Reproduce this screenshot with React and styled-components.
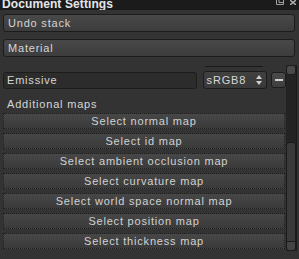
import React from 'react'
import styled, { createGlobalStyle } from 'styled-components'

const Global = createGlobalStyle`
  html, body {
    margin: 0;
    padding: 0;
    background: #333333;
  }
`

const Panel = styled.div`
  width: 299px;
  height: 259px;
  overflow: hidden;
  background: #333333;
  font-family: 'Liberation Sans', Arial, sans-serif;
  color: #d6d6d6;
  display: flex;
  flex-direction: column;
`

const TitleBar = styled.div`
  height: 10px;
  flex: none;
  overflow: hidden;
  background: #1b1b1b;
  display: flex;
  align-items: flex-start;
  padding: 0 3px 0 2px;
`

const Title = styled.div`
  font-weight: bold;
  font-size: 12px;
  line-height: 12px;
  margin-top: -2px;
  color: #e4e6ea;
  letter-spacing: 0.1px;
  flex: 1;
`

const TitleIcons = styled.div`
  display: flex;
  gap: 6px;
  align-items: flex-start;
`

const TopFields = styled.div`
  display: flex;
  flex-direction: column;
  gap: 7px;
  padding: 4px 4px 0 3px;
`

const Field = styled.div`
  height: 16px;
  border: 1px solid #1c1c1c;
  border-radius: 3px;
  background: linear-gradient(#494949, #3c3c3c);
  font-size: 11px;
  letter-spacing: 0.8px;
  line-height: 16px;
  padding-left: 4px;
`

const Lower = styled.div`
  display: flex;
  margin-top: 7px;
  flex: 1;
`

const Content = styled.div`
  width: 283px;
  padding-left: 3px;
  display: flex;
  flex-direction: column;
`

const Separator = styled.div`
  height: 1px;
  width: 58px;
  margin: 2px 0 0 202px;
  background: #1a1a1a;
`

const MaterialRow = styled.div`
  display: flex;
  align-items: center;
  margin-top: 4px;
  height: 18px;
`

const Input = styled.div`
  width: 193px;
  height: 15px;
  border: 1px solid #1c1c1c;
  border-radius: 3px;
  background: #2c2c2c;
  font-size: 11px;
  letter-spacing: 0.8px;
  line-height: 15px;
  padding-left: 3px;
  box-sizing: content-box;
`

const Select = styled.div`
  margin-left: 6px;
  width: 57px;
  height: 16px;
  border: 1px solid #1c1c1c;
  border-radius: 3px;
  background: linear-gradient(#414141, #393939);
  display: flex;
  align-items: center;
  justify-content: space-between;
  padding: 0 4px 0 3px;
  box-sizing: content-box;
  font-size: 11px;
  letter-spacing: 0.8px;
`

const MinusButton = styled.div`
  margin-left: 4px;
  width: 13px;
  height: 14px;
  border: 1px solid #1c1c1c;
  border-radius: 3px;
  background: linear-gradient(#4a4a4a, #3e3e3e);
  display: flex;
  align-items: center;
  justify-content: center;
  &::after {
    content: '';
    width: 8px;
    height: 2px;
    background: #d0d0d0;
  }
`

const Label = styled.div`
  font-size: 11px;
  letter-spacing: 0.8px;
  line-height: 13px;
  margin: 9px 0 0 4px;
`

const MapList = styled.div`
  display: flex;
  flex-direction: column;
  gap: 4px;
  margin-top: 2px;
  width: 282px;
`

const MapButton = styled.div`
  height: 14px;
  border: 1px dotted #1e1e1e;
  background: linear-gradient(#474747, #3a3a3a);
  text-align: center;
  font-size: 11px;
  letter-spacing: 0.8px;
  line-height: 14px;
  color: #d2d2d2;
`

const ScrollBar = styled.div`
  width: 10px;
  margin-top: 1px;
  height: 186px;
  display: flex;
  flex-direction: column;
  background: #232323;
  border-right: 1px solid #1a1a1a;
`

const ScrollButton = styled.div`
  height: 8px;
  border: 1px solid #1c1c1c;
  border-radius: 3px;
  background: #4a4a4a;
  flex: none;
`

const ScrollThumb = styled.div`
  margin-top: 67px;
  flex: 1;
  border: 1px solid #1a1a1a;
  border-radius: 3px;
  background: #3a3a3a;
  display: flex;
  flex-direction: column;
  justify-content: flex-end;
`

const ThumbEnd = styled.div`
  height: 8px;
  border-top: 1px solid #1a1a1a;
  background: #444444;
  border-radius: 0 0 3px 3px;
`

const maps = [
  'Select normal map',
  'Select id map',
  'Select ambient occlusion map',
  'Select curvature map',
  'Select world space normal map',
  'Select position map',
  'Select thickness map',
]

export default function App() {
  return (
    <>
      <Global />
      <Panel>
        <TitleBar>
          <Title>Document Settings</Title>
          <TitleIcons>
            <svg width="8" height="5" viewBox="0 0 8 5">
              <path d="M0.5 0 V4.5 H7.5 V0 M3 0 V2.5 H7.5" fill="none" stroke="#a0a0a0" strokeWidth="1" />
            </svg>
            <svg width="6" height="5" viewBox="0 0 6 5">
              <path d="M0 0 L6 5 M6 0 L0 5" stroke="#b0b0b0" strokeWidth="1.4" />
            </svg>
          </TitleIcons>
        </TitleBar>
        <TopFields>
          <Field>Undo stack</Field>
          <Field>Material</Field>
        </TopFields>
        <Lower>
          <Content>
            <Separator />
            <MaterialRow>
              <Input>Emissive</Input>
              <Select>
                <span>sRGB8</span>
                <svg width="6" height="10" viewBox="0 0 6 10">
                  <path d="M3 0 L6 4 H0 Z M0 6 H6 L3 10 Z" fill="#cfcfcf" />
                </svg>
              </Select>
              <MinusButton />
            </MaterialRow>
            <Label>Additional maps</Label>
            <MapList>
              {maps.map(m => (
                <MapButton key={m}>{m}</MapButton>
              ))}
            </MapList>
          </Content>
          <ScrollBar>
            <ScrollButton />
            <ScrollThumb>
              <ThumbEnd />
            </ScrollThumb>
          </ScrollBar>
        </Lower>
      </Panel>
    </>
  )
}
